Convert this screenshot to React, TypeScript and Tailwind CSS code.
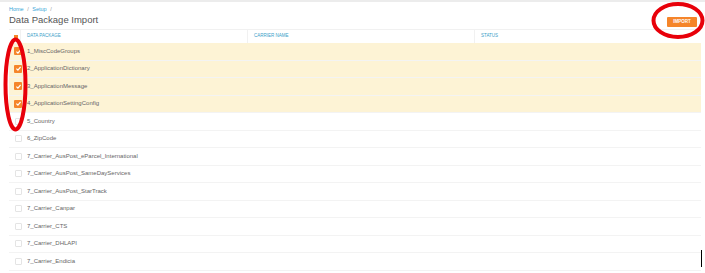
const packages = [
  { name: "1_MiscCodeGroups", checked: true },
  { name: "2_ApplicationDictionary", checked: true },
  { name: "3_ApplicationMessage", checked: true },
  { name: "4_ApplicationSettingConfig", checked: true },
  { name: "5_Country", checked: false },
  { name: "6_ZipCode", checked: false },
  { name: "7_Carrier_AusPost_eParcel_International", checked: false },
  { name: "7_Carrier_AusPost_SameDayServices", checked: false },
  { name: "7_Carrier_AusPost_StarTrack", checked: false },
  { name: "7_Carrier_Canpar", checked: false },
  { name: "7_Carrier_CTS", checked: false },
  { name: "7_Carrier_DHLAPI", checked: false },
  { name: "7_Carrier_Endicia", checked: false },
];

function Check({ on }: { on: boolean }) {
  if (!on) return <span className="block w-[7px] h-[7px] border border-[#e4e4e4] bg-white rounded-[1px]" />;
  return (
    <span className="flex items-center justify-center w-[8px] h-[8px] bg-[#f5852a] rounded-[1px]">
      <svg width="7" height="7" viewBox="0 0 10 10">
        <path d="M2 5.2 L4.2 7.3 L8 2.8" fill="none" stroke="white" strokeWidth="1.8" />
      </svg>
    </span>
  );
}

export default function App() {
  return (
    <div className="relative w-[705px] h-[273px] overflow-hidden bg-white font-['Liberation_Sans',Arial,sans-serif] text-[#666]">
      <div className="h-[2px] bg-[#ececec]" />
      <div className="flex items-start justify-between pl-[9px] pr-[8px] pt-[4px]">
        <div>
          <div className="text-[5.5px] leading-[7px] text-[#3aa6d8]">
            Home <span className="text-[#999] mx-[2px]">/</span> Setup <span className="text-[#999] ml-[2px]">/</span>
          </div>
          <div className="text-[9.5px] leading-[12px] text-[#555] mt-[1px]">Data Package Import</div>
        </div>
        <button className="mt-[11px] w-[30px] h-[10px] bg-[#f5852a] text-white text-[4.5px] font-bold leading-[10px] rounded-[1px]">
          IMPORT
        </button>
      </div>

      <div className="mx-[9px] mt-[2px] w-[692px] border-t border-[#f1f1f1]">
        <div className="flex h-[13px] items-center text-[4.5px] text-[#3aa0c8] uppercase">
          <div className="w-[12px] h-full flex items-center justify-center border-r border-[#f1f1f1]">
            <span className="block w-[4px] h-[4px] bg-[#f5852a] ml-[2px]" />
          </div>
          <div className="w-[227px] h-full flex items-center pl-[6px] border-r border-[#f1f1f1]">Data Package</div>
          <div className="w-[227px] h-full flex items-center pl-[6px] border-r border-[#f1f1f1]">Carrier Name</div>
          <div className="flex-1 h-full flex items-center pl-[6px]">Status</div>
        </div>
        {packages.map((p) => (
          <div
            key={p.name}
            className={`flex items-center h-[17.5px] border-b border-[#f3f3f3] text-[6px] ${p.checked ? "bg-[#fdf3d5]" : "bg-white"}`}
          >
            <div className="w-[13px] flex justify-end">
              <Check on={p.checked} />
            </div>
            <div className="pl-[5px]">{p.name}</div>
          </div>
        ))}
      </div>

      <svg className="absolute left-0 top-0 pointer-events-none" width="705" height="273">
        <ellipse cx="678" cy="20.5" rx="24.5" ry="16.5" fill="none" stroke="#e8000a" strokeWidth="4" />
        <ellipse cx="15.5" cy="84.5" rx="10" ry="45" fill="none" stroke="#e8000a" strokeWidth="4" />
      </svg>
      <div className="absolute left-[701px] top-[250px] w-[1px] h-[17px] bg-black" />
    </div>
  );
}
